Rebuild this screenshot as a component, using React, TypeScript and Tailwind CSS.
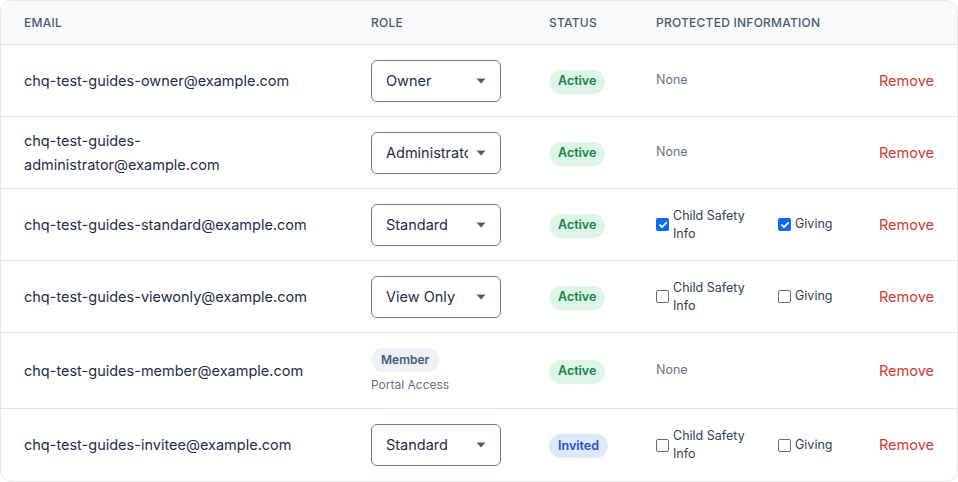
import React from 'react';

type Row = {
  email: string;
  role: string | null;
  status: 'Active' | 'Invited';
  protectedInfo: 'none' | 'checked' | 'unchecked';
  tall?: boolean;
};

const rows: Row[] = [
  { email: 'chq-test-guides-owner@example.com', role: 'Owner', status: 'Active', protectedInfo: 'none' },
  { email: 'chq-test-guides-administrator@example.com', role: 'Administrator', status: 'Active', protectedInfo: 'none' },
  { email: 'chq-test-guides-standard@example.com', role: 'Standard', status: 'Active', protectedInfo: 'checked' },
  { email: 'chq-test-guides-viewonly@example.com', role: 'View Only', status: 'Active', protectedInfo: 'unchecked' },
  { email: 'chq-test-guides-member@example.com', role: null, status: 'Active', protectedInfo: 'none', tall: true },
  { email: 'chq-test-guides-invitee@example.com', role: 'Standard', status: 'Invited', protectedInfo: 'unchecked' },
];

// column starts: email 24, role 371, status 549, protected 656
const cols = 'grid grid-cols-[347px_178px_107px_1fr_auto] items-center pl-[23px] pr-[23px]';

function RoleSelect({ value }: { value: string }) {
  return (
    <div className="flex h-[42px] w-[130px] items-center rounded-md border border-[#6b7a90] pl-[14px] pr-[14px]">
      <span className="w-[82px] overflow-hidden whitespace-nowrap text-[14.5px] text-[#1f2d47]">{value}</span>
      <svg className="ml-auto" width="10" height="6" viewBox="0 0 10 6">
        <path d="M0.5 0.5h9L5 5.5z" fill="#4a5a75" />
      </svg>
    </div>
  );
}

function Check({ checked }: { checked: boolean }) {
  if (checked) {
    return (
      <span className="flex h-[13px] w-[13px] shrink-0 items-center justify-center rounded-[2px] bg-[#0b6cf0]">
        <svg width="10" height="10" viewBox="0 0 10 10">
          <path d="M2 5.2l2 2L8.2 2.8" stroke="white" strokeWidth="1.8" fill="none" strokeLinecap="round" strokeLinejoin="round" />
        </svg>
      </span>
    );
  }
  return <span className="h-[13px] w-[13px] shrink-0 rounded-[2px] border border-[#6b6b6b] bg-white" />;
}

function Protected({ kind }: { kind: Row['protectedInfo'] }) {
  if (kind === 'none') {
    return <span className="text-[12.5px] text-[#6b7280]">None</span>;
  }
  const checked = kind === 'checked';
  return (
    <div className="flex items-center">
      <div className="flex w-[122px] items-center gap-[4px]">
        <Check checked={checked} />
        <span className="w-[76px] text-[12.5px] leading-[18px] text-[#334155]">Child Safety Info</span>
      </div>
      <div className="flex items-center gap-[4px]">
        <Check checked={checked} />
        <span className="text-[12.5px] text-[#334155]">Giving</span>
      </div>
    </div>
  );
}

function StatusBadge({ status }: { status: Row['status'] }) {
  const tone = status === 'Active' ? 'bg-[#dcf5e7] text-[#1a7f46]' : 'bg-[#dde9fb] text-[#1d4ed8]';
  return (
    <span className={`inline-flex h-6 items-center rounded-full px-[9px] text-[12.5px] font-semibold ${tone}`}>
      {status}
    </span>
  );
}

export default function App() {
  return (
    <div className="h-[482px] w-[958px] bg-white font-['Inter',sans-serif]">
      <div className="h-full w-full overflow-hidden rounded-xl border border-[#e5e7eb] bg-white">
        {/* Header */}
        <div className={`${cols} h-[44px] border-b border-[#e2e6ec] bg-[#f8f9fb] text-[12px] font-medium tracking-[0.02em] text-[#4a5a75]`}>
          <span>EMAIL</span>
          <span>ROLE</span>
          <span>STATUS</span>
          <span>PROTECTED INFORMATION</span>
          <span />
        </div>

        {rows.map((row, i) => (
          <div
            key={row.email}
            className={`${cols} ${row.tall ? 'h-[76px]' : 'h-[72px]'} ${i < rows.length - 1 ? 'border-b border-[#e2e6ec]' : ''}`}
          >
            <span className="max-w-[310px] text-[14.5px] leading-[24px] text-[#1f2d47]">{row.email}</span>
            <div>
              {row.role ? (
                <RoleSelect value={row.role} />
              ) : (
                <div className="flex flex-col items-start">
                  <span className="inline-flex h-6 items-center rounded-full bg-[#eef1f6] px-[10px] text-[12px] font-semibold text-[#4a5a75]">Member</span>
                  <span className="mt-[4px] text-[12px] text-[#6b7280]">Portal Access</span>
                </div>
              )}
            </div>
            <div>
              <StatusBadge status={row.status} />
            </div>
            <Protected kind={row.protectedInfo} />
            <span className="text-[14.5px] text-[#cc3a30]">Remove</span>
          </div>
        ))}
      </div>
    </div>
  );
}
